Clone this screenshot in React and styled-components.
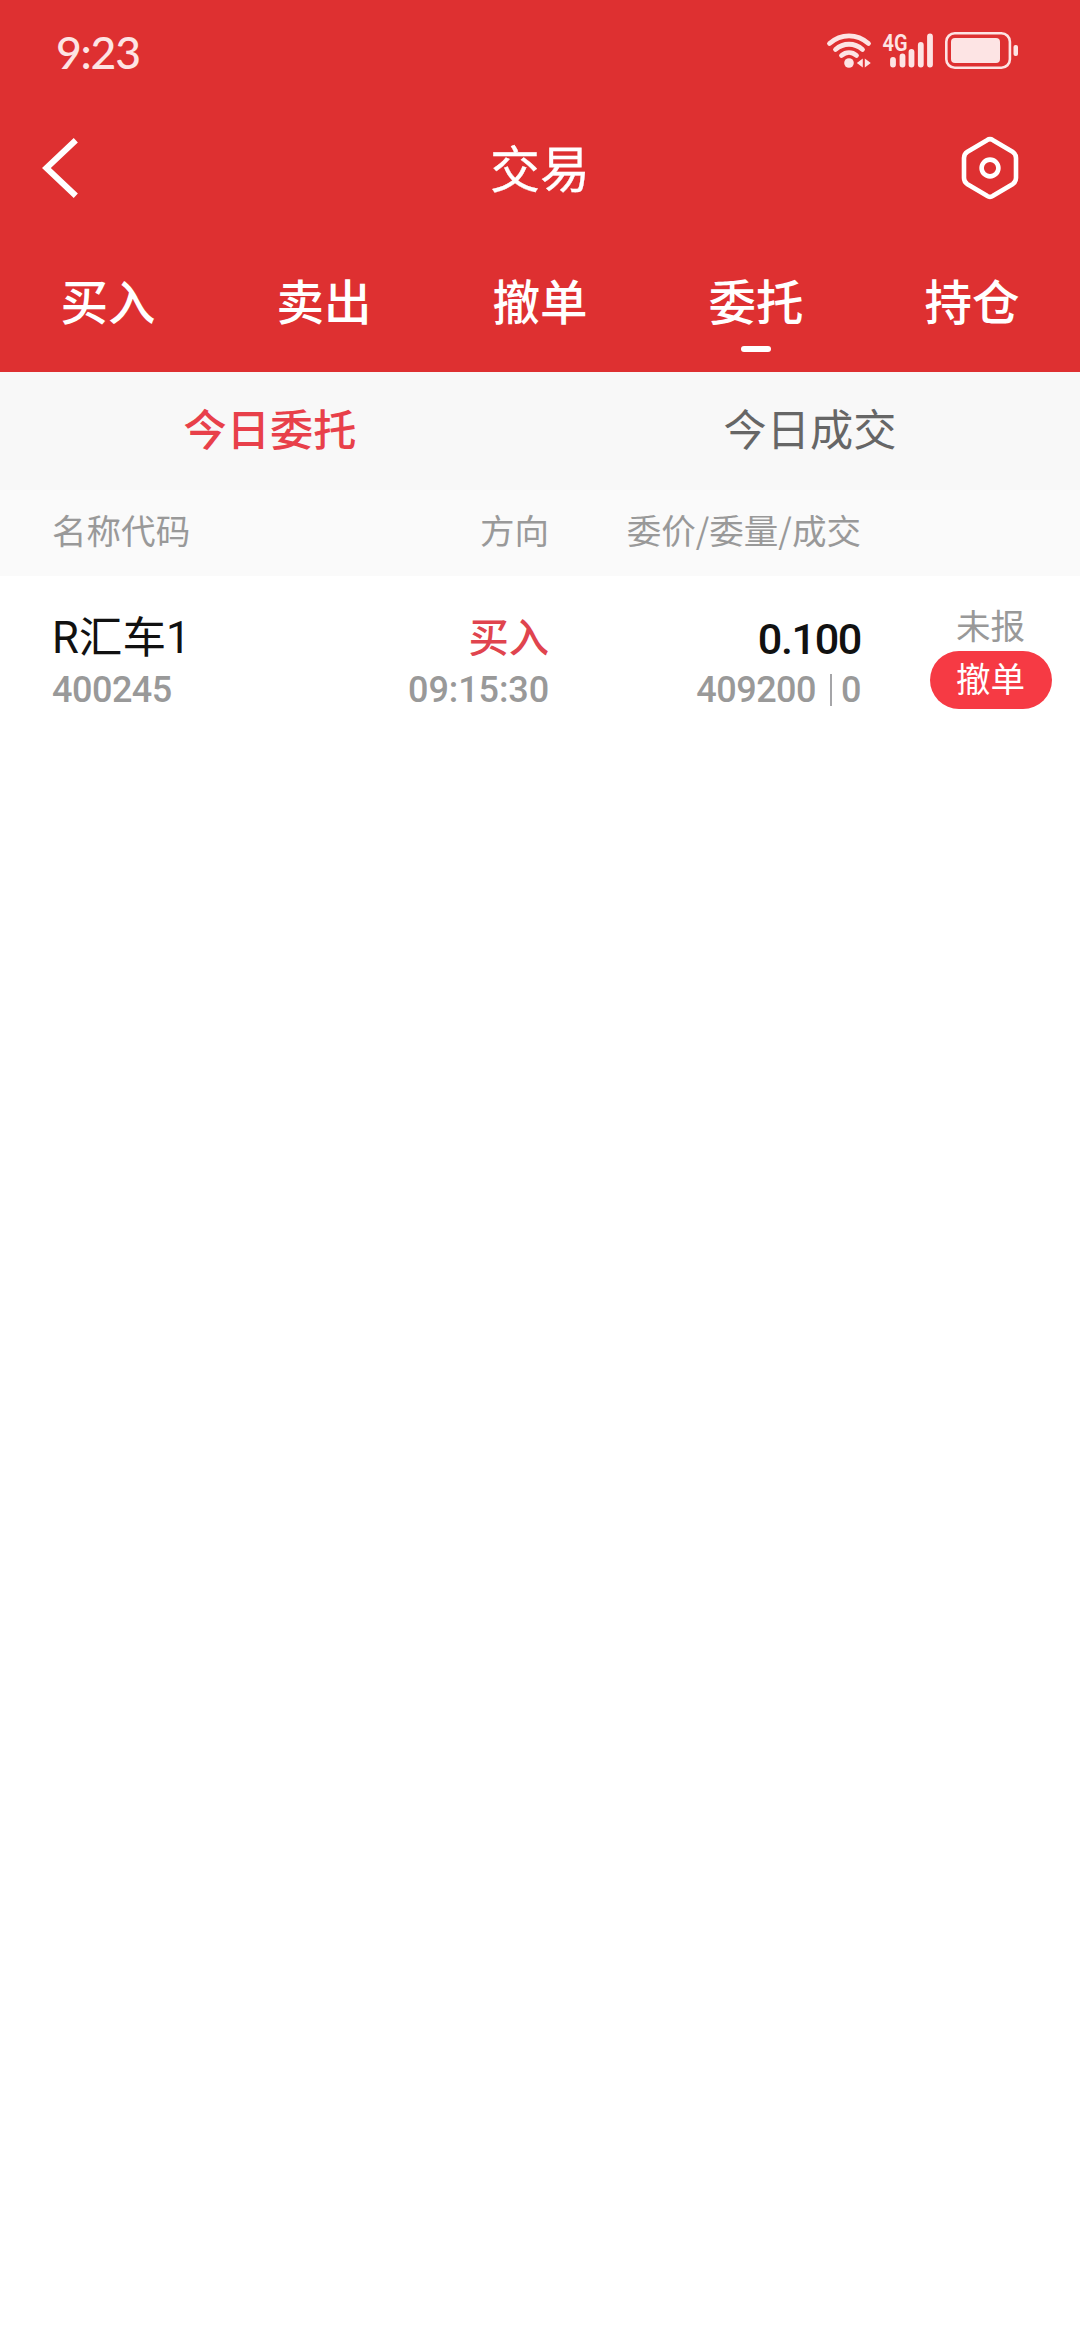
import React from 'react';
import styled, { createGlobalStyle } from 'styled-components';

const GlobalStyle = createGlobalStyle`
    * { box-sizing: border-box; }
    body {
        margin: 0;
        background: #fff;
        font-family: "Noto Sans CJK SC", sans-serif;
    }
`;

const Page = styled.div`
    width: 1080px;
    height: 2340px;
    overflow: hidden;
    background: #fff;
`;

const Header = styled.header`
    height: 372px;
    background: #de3031;
    color: #fff;
`;

const StatusBar = styled.div`
    display: flex;
    justify-content: space-between;
    align-items: center;
    height: 104px;
    padding: 0 60px 0 56px;
    color: #fde4e4;
`;

const Clock = styled.span`
    font: 500 44.5px/60px Lato, sans-serif;
    letter-spacing: -1.2px;
`;

const NavBar = styled.div`
    display: grid;
    grid-template-columns: 180px 1fr 180px;
    align-items: center;
    height: 128px;
`;

const NavButton = styled.div`
    display: flex;
    justify-content: ${props => props.$left ? 'flex-start' : 'center'};
    padding-left: ${props => props.$left ? '36px' : '0'};
`;

const Title = styled.h1`
    margin: 0;
    font-size: 50px;
    line-height: 60px;
    font-weight: 400;
    text-align: center;
    padding-bottom: 4px;
    -webkit-text-stroke: 0.3px currentColor;
`;

const Tabs = styled.nav`
    display: flex;
    height: 140px;
`;

const Tab = styled.div`
    flex: 1;
    display: flex;
    flex-direction: column;
    align-items: center;
    padding-top: 38px;
    font-size: 47.5px;
    line-height: 60px;
    font-weight: 500;

    &::after {
        content: "";
        width: 30px;
        height: 6px;
        margin-top: 16px;
        border-radius: 3px;
        background: ${props => props.$active ? '#fff' : 'transparent'};
    }
`;

const SubTabs = styled.div`
    display: flex;
    height: 118px;
    background: #f8f8f8;
`;

const SubTab = styled.div`
    flex: 1;
    padding-top: 25px;
    text-align: center;
    font-size: 43.2px;
    line-height: 60px;
    font-weight: ${props => props.$active ? 500 : 400};
    color: ${props => props.$active ? '#e8404a' : '#666'};
`;

const Row = styled.div`
    display: grid;
    grid-template-columns: 248px 249px 312px 219px;
    padding-left: 52px;
`;

const TableHead = styled(Row)`
    height: 86px;
    padding-top: 7px;
    background: #fafafa;
    font-size: 34.56px;
    line-height: 64px;
    color: #999;
`;

const OrderRow = styled(Row)`
    height: 156px;
    padding-top: 28px;
`;

const Cell = styled.div`
    text-align: ${props => props.$right ? 'right' : 'left'};
    white-space: nowrap;
`;

const Name = styled.div`
    height: 61px;
    padding-top: 7px;
    font: 400 43.6px/56px Roboto, "Noto Sans CJK SC", sans-serif;
    color: #111;
`;

const Side = styled.div`
    height: 61px;
    font-size: 40.3px;
    line-height: 62px;
    font-weight: 500;
    color: #e0444e;
`;

const Price = styled.div`
    height: 61px;
    padding-top: 7px;
    font: 500 43.2px/58px Roboto, sans-serif;
    letter-spacing: -1.4px;
    color: #111;
`;

const Sub = styled.div`
    display: flex;
    justify-content: ${props => props.$right ? 'flex-end' : 'flex-start'};
    align-items: center;
    font: 500 36px/50px Roboto, sans-serif;
    letter-spacing: ${props => props.$time ? '-0.1px' : '-0.5px'};
    color: #999;
`;

const Divider = styled.i`
    width: 2px;
    height: 32px;
    margin: 0 9px 0 14px;
    background: #a5a5a8;
`;

const StatusCell = styled.div`
    display: flex;
    flex-direction: column;
    align-items: center;
    margin-left: 40px;
    font-size: 34.56px;
    color: #999;
`;

const State = styled.div`
    height: 47px;
    line-height: 40px;
`;

const CancelButton = styled.button`
    width: 122px;
    height: 58px;
    padding: 0 0 6px;
    border: 0;
    border-radius: 29px;
    background: #f63a44;
    color: #fff;
    font: 400 34.56px/50px "Noto Sans CJK SC", sans-serif;
`;

const Network = styled.text`
    font: 600 24px Roboto, sans-serif;
`;

const tabs = ['买入', '卖出', '撤单', '委托', '持仓'];

const orders = [
    { name: 'R汇车1', code: '400245', side: '买入', time: '09:15:30', price: '0.100', amount: '409200', done: '0', state: '未报' }
];

const StatusIcons = () => (
    <svg width="194" height="44" viewBox="826 30 194 44" fill="none" stroke="currentColor" strokeLinecap="round">
        <path d="M829.5 43.5C841 33.3 857 33.3 868.5 43.5M835.5 49.5C843.5 42.5 854.5 42.5 862.5 49.5M841.5 55.5C846 51.7 852 51.7 856.5 55.5" strokeWidth="4.8" />
        <circle cx="849" cy="63" r="4.8" fill="currentColor" stroke="none" />
        <path d="M862.8 58.5v9l-6-4.5zM864.8 58.5v9l6-4.5z" fill="currentColor" stroke="none" />
        <Network x="882.5" y="50.8" textLength="25" lengthAdjust="spacingAndGlyphs" fill="currentColor" stroke="none">4G</Network>
        <path d="M893 60v4.5M902.5 56.5v8M911.5 52v12.5M920.8 45v19.5M930 36.5v28" strokeWidth="5.8" />
        <rect x="946.3" y="33.3" width="63.6" height="34.4" rx="8.5" strokeWidth="2.6" />
        <rect x="951" y="38" width="49" height="25" rx="4" fill="currentColor" stroke="none" />
        <rect x="1013.5" y="45" width="4.5" height="11" rx="2" fill="currentColor" stroke="none" />
    </svg>
);

const BackIcon = () => (
    <svg width="48" height="64" viewBox="36 136 48 64" fill="none" stroke="currentColor" strokeWidth="6">
        <path d="M75.8 140.2L46.4 168L75.8 195.8" />
    </svg>
);

const SettingIcon = () => (
    <svg width="64" height="68" viewBox="958 134 64 68" fill="none" stroke="currentColor" strokeWidth="4.6" strokeLinejoin="round">
        <path d="M987 140.2Q990 138.2 993 140.2L1012.5 151.8Q1016 154 1016 158V178Q1016 182 1012.5 184.2L993 195.8Q990 197.8 987 195.8L967.5 184.2Q964 182 964 178V158Q964 154 967.5 151.8Z" />
        <circle cx="990" cy="168" r="8.4" />
    </svg>
);

const Order = ({ data }) => (
    <OrderRow>
        <Cell>
            <Name>{data.name}</Name>
            <Sub>{data.code}</Sub>
        </Cell>
        <Cell $right>
            <Side>{data.side}</Side>
            <Sub $right $time>{data.time}</Sub>
        </Cell>
        <Cell $right>
            <Price>{data.price}</Price>
            <Sub $right>{data.amount}<Divider />{data.done}</Sub>
        </Cell>
        <StatusCell>
            <State>{data.state}</State>
            <CancelButton>撤单</CancelButton>
        </StatusCell>
    </OrderRow>
);

const App = () => (
    <Page>
        <GlobalStyle />
        <Header>
            <StatusBar>
                <Clock>9:23</Clock>
                <StatusIcons />
            </StatusBar>
            <NavBar>
                <NavButton $left><BackIcon /></NavButton>
                <Title>交易</Title>
                <NavButton><SettingIcon /></NavButton>
            </NavBar>
            <Tabs>
                {tabs.map(tab => <Tab key={tab} $active={tab == '委托'}>{tab}</Tab>)}
            </Tabs>
        </Header>
        <SubTabs>
            <SubTab $active>今日委托</SubTab>
            <SubTab>今日成交</SubTab>
        </SubTabs>
        <TableHead>
            <Cell>名称代码</Cell>
            <Cell $right>方向</Cell>
            <Cell $right>委价/委量/成交</Cell>
        </TableHead>
        {orders.map(order => <Order key={order.code} data={order} />)}
    </Page>
);

export default App;
